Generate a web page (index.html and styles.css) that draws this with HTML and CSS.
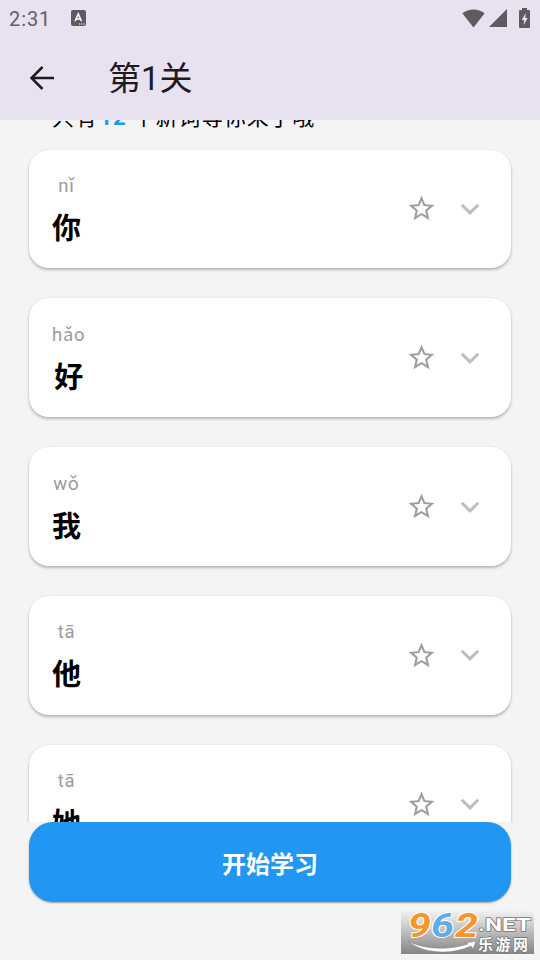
FILE: index.html
```html
<!DOCTYPE html>
<html lang="zh-CN">
<head>
<meta charset="utf-8">
<title>第1关</title>
<link rel="stylesheet" href="styles.css">
</head>
<body>
<svg class="defs" width="0" height="0" aria-hidden="true">
  <symbol id="star" viewBox="0 0 24 24"><path d="M22 9.24l-7.19-.62L12 2 9.19 8.63 2 9.24l5.46 4.73L5.82 21 12 17.27 18.18 21l-1.63-7.03L22 9.24zM12 15.4l-3.76 2.27 1-4.28-3.32-2.88 4.38-.38L12 6.1l1.71 4.04 4.38.38-3.32 2.88 1 4.28L12 15.4z"/></symbol>
  <symbol id="chevron" viewBox="0 0 24 24"><path d="M4.9 8.4L12 15.3l7.1-6.9" fill="none" stroke="currentColor" stroke-width="2.5"/></symbol>
</svg>
<header class="top">
  <div class="status">
    <span class="time">2:31</span>
    <svg class="app-badge" width="15" height="16" viewBox="0 0 15 16"><rect width="15" height="16" rx="2" fill="#5d5a62"/><path d="M4.1 11.2L7.3 4l3.2 7.2M5.4 9h3.8" fill="none" stroke="#fff" stroke-width="1.6"/><path d="M8 14h1.2M10.2 14h1.2M12.4 14h1.2" stroke="#fff" stroke-width="1"/></svg>
    <div class="indicators">
      <svg width="23" height="19" viewBox="0 0 23 19"><path d="M.3 4.3C6.5-.9 16.5-.9 22.7 4.3L11.5 18.6z"/></svg>
      <svg width="18" height="18" viewBox="0 0 18 18"><path d="M0 18L18 0v18z"/></svg>
      <svg width="11" height="20" viewBox="0 0 11 20"><path fill-rule="evenodd" d="M3 0h5v2h2q1 0 1 1v16q0 1-1 1H1q-1 0-1-1V3q0-1 1-1h2zM6.7 5L2.7 12h2.4L4.6 17l4.1-7H6.3z"/></svg>
    </div>
  </div>
  <div class="bar">
    <svg class="back" width="24" height="24" viewBox="0 0 24 24"><path d="M24 12H1.8M12.5 1L1.5 12l11 11" fill="none" stroke="#1d1b20" stroke-width="2.5"/></svg>
    <h1 class="title">第1关</h1>
  </div>
</header>
<main class="list">
  <p class="hint">只有<b class="count">12</b> 个新词等你来了哦</p>
  <article class="card"><div class="word"><span class="pinyin">nǐ</span><span class="hanzi">你</span></div><svg class="star"><use href="#star"/></svg><svg class="chevron"><use href="#chevron"/></svg></article>
  <article class="card"><div class="word"><span class="pinyin">hǎo</span><span class="hanzi">好</span></div><svg class="star"><use href="#star"/></svg><svg class="chevron"><use href="#chevron"/></svg></article>
  <article class="card"><div class="word"><span class="pinyin">wǒ</span><span class="hanzi">我</span></div><svg class="star"><use href="#star"/></svg><svg class="chevron"><use href="#chevron"/></svg></article>
  <article class="card"><div class="word"><span class="pinyin">tā</span><span class="hanzi">他</span></div><svg class="star"><use href="#star"/></svg><svg class="chevron"><use href="#chevron"/></svg></article>
  <article class="card"><div class="word"><span class="pinyin">tā</span><span class="hanzi">她</span></div><svg class="star"><use href="#star"/></svg><svg class="chevron"><use href="#chevron"/></svg></article>
</main>
<button class="start">开始学习</button>
<aside class="watermark">
  <svg width="133" height="44" viewBox="0 0 133 44">
    <defs><linearGradient id="grey" x1="0" y1="0" x2="0" y2="1"><stop offset="0" stop-color="#f4f4f4"/><stop offset="1" stop-color="#858585"/></linearGradient></defs>
    <rect width="133" height="44" fill="url(#grey)"/>
    <path d="M7 31C20 43 49 46 70 36l2 3 3-8-11 2 3 1C49 40 24 40 7 31z" fill="#fff" stroke="#777" stroke-width=".5"/>
    <g class="wm-digits"><text x="7" y="27" textLength="23" lengthAdjust="spacingAndGlyphs" fill="#f9962b">9</text><text x="30" y="27" textLength="23" lengthAdjust="spacingAndGlyphs" fill="#61ade3">6</text><text x="54" y="27" textLength="23" lengthAdjust="spacingAndGlyphs" fill="#f9962b">2</text></g>
    <text class="wm-net" x="77" y="21" textLength="53" lengthAdjust="spacingAndGlyphs">.NET</text>
    <text class="wm-name" x="77" y="40" textLength="50">乐游网</text>
  </svg>
</aside>
</body>
</html>
```
FILE: styles.css
```css
* { box-sizing: border-box; }
body {
  margin: 0;
  width: 540px;
  height: 960px;
  overflow: hidden;
  position: relative;
  display: flex;
  flex-direction: column;
  background: #f4f4f4;
  color: #000;
  font-family: Roboto, "Noto Sans CJK SC", sans-serif;
}
svg { display: block; flex: none; }
.defs { position: absolute; }
.top { height: 120px; flex: none; background: #e8e1ef; }
.status {
  height: 36px;
  padding: 0 10px 0 9px;
  display: flex;
  align-items: center;
  color: #625e67;
}
.time { font-size: 20px; letter-spacing: .9px; line-height: 36px; padding-top: 2px; }
.app-badge { margin-left: 20px; }
.indicators { margin-left: auto; display: flex; align-items: center; gap: 4px; fill: #5d5a62; }
.indicators svg:last-child { margin-left: 8px; }
.bar { height: 84px; padding-left: 30px; display: flex; align-items: center; }
.title {
  margin: 0 0 0 54px;
  padding-top: 2px;
  font-size: 33px;
  line-height: 48px;
  font-weight: 400;
  color: #1d1b20;
}
.list { height: 702px; flex: none; overflow: hidden; padding: 0 29px; }
.hint { margin: -18px 0 15.6px 23px; height: 32px; line-height: 32px; font-size: 22px; letter-spacing: .8px; white-space: nowrap; }
.count { color: #2196f3; margin-left: 2px; }
.card {
  height: 118.8px;
  margin-bottom: 30px;
  padding: 0 27px 0 23px;
  display: flex;
  align-items: center;
  background: #fff;
  border-radius: 20px;
  box-shadow: 0 2px 3px rgba(0,0,0,.25), 0 0 2px rgba(0,0,0,.08);
}
.word { display: flex; flex-direction: column; align-items: center; padding-top: 7px; }
.pinyin { font-size: 18.5px; line-height: 24px; letter-spacing: .7px; color: #9b9b9b; }
.hanzi { font-size: 29px; line-height: 44px; font-weight: 700; margin-top: 9px; }
.star { width: 31px; height: 31px; margin-left: auto; fill: #9e9e9e; }
.chevron { width: 28px; height: 28px; margin-left: 19px; color: #bdbdbd; }
.start {
  width: 482px;
  height: 80px;
  flex: none;
  margin: 0 29px;
  padding: 6px 0 0;
  border: 0;
  border-radius: 24px;
  background: #2196f3;
  color: #fff;
  font: 700 24px/74px Roboto, "Noto Sans CJK SC", sans-serif;
  box-shadow: 0 1px 2px rgba(0,0,0,.35);
}
.watermark { position: absolute; left: 401px; top: 910px; }
.watermark text { paint-order: stroke; stroke-linejoin: round; }
.wm-digits { font: italic 700 34px Roboto, sans-serif; stroke: #fff; stroke-width: 2px; }
.wm-net { font: 700 19px Roboto, sans-serif; fill: #fff; stroke: #777; stroke-width: 1.5px; }
.wm-name { font: 700 15px "Noto Sans CJK SC", sans-serif; fill: #fff; stroke: #777; stroke-width: 1.5px; }
```
